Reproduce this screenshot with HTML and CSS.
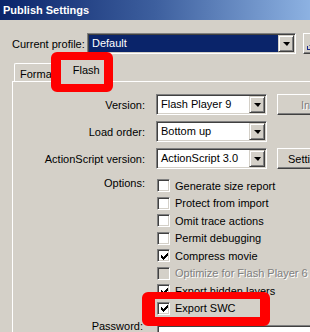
FILE: index.html
```html
<!DOCTYPE html>
<html>
<head>
<meta charset="utf-8">
<link rel="stylesheet" href="styles.css">
</head>
<body>
<div class="window">
  <div class="titlebar">Publish Settings</div>
  <div class="profile-row">
    <span class="profile-label">Current profile:</span>
    <div class="combo combo-profile">
      <span class="combo-value selected">Default</span>
      <span class="drop"><span class="arrow"></span></span>
    </div>
    <div class="btn iconbtn">
      <svg width="12" height="14" viewBox="0 0 12 14"><path d="M5 1h2v7h2l-3 3-3-3h2z" fill="#1c2a8c"/><path d="M1 12h10v1H1z" fill="#1c2a8c"/><path d="M1 9h1v3H1zM10 9h1v3h-1z" fill="#1c2a8c"/></svg>
    </div>
  </div>
  <div class="tabs">
    <div class="tab">Format</div>
    <div class="tab active">Flash</div>
  </div>
  <div class="panel">
    <div class="form">
      <span class="label">Version:</span>
      <div class="combo"><span class="combo-value">Flash Player 9</span><span class="drop"><span class="arrow"></span></span></div>
      <div class="btn side disabled info">Info...</div>

      <span class="label">Load order:</span>
      <div class="combo"><span class="combo-value">Bottom up</span><span class="drop"><span class="arrow"></span></span></div>
      <span></span>

      <span class="label">ActionScript version:</span>
      <div class="combo"><span class="combo-value">ActionScript 3.0</span><span class="drop"><span class="arrow"></span></span></div>
      <div class="btn side">Settings...</div>

      <span class="label label-top">Options:</span>
      <div class="checks">
        <div class="check"><span class="box"></span>Generate size report</div>
        <div class="check"><span class="box"></span>Protect from import</div>
        <div class="check"><span class="box"></span>Omit trace actions</div>
        <div class="check"><span class="box"></span>Permit debugging</div>
        <div class="check"><span class="box checked"><svg width="9" height="9" viewBox="0 0 9 9"><path d="M7 1h1v1H7zM6 2h2v1H6zM1 3h1v1H1zM5 3h3v1H5zM1 4h2v1H1zM4 4h3v1H4zM1 5h5v1H1zM2 6h3v1H2zM3 7h1v1H3z" fill="#000"/></svg></span>Compress movie</div>
        <div class="check disabled"><span class="box"></span>Optimize for Flash Player 6 r65</div>
        <div class="check"><span class="box checked"><svg width="9" height="9" viewBox="0 0 9 9"><path d="M7 1h1v1H7zM6 2h2v1H6zM1 3h1v1H1zM5 3h3v1H5zM1 4h2v1H1zM4 4h3v1H4zM1 5h5v1H1zM2 6h3v1H2zM3 7h1v1H3z" fill="#000"/></svg></span>Export hidden layers</div>
        <div class="check"><span class="box checked"><svg width="9" height="9" viewBox="0 0 9 9"><path d="M7 1h1v1H7zM6 2h2v1H6zM1 3h1v1H1zM5 3h3v1H5zM1 4h2v1H1zM4 4h3v1H4zM1 5h5v1H1zM2 6h3v1H2zM3 7h1v1H3z" fill="#000"/></svg></span>Export SWC</div>
      </div>

      <span class="label label-pw">Password:</span>
      <div class="textbox"></div>
    </div>
  </div>
  <div class="mark mark-tab"></div>
  <div class="mark mark-swc"></div>
</div>
</body>
</html>
```

FILE: styles.css
```css
html, body {
  margin: 0;
  padding: 0;
}
body {
  width: 310px;
  height: 332px;
  overflow: hidden;
  background: #d4d0c8;
  font-family: "Liberation Sans", Arial, sans-serif;
  font-size: 11px;
  color: #000;
}
.window {
  position: relative;
  width: 310px;
  height: 332px;
  overflow: hidden;
}
.titlebar {
  height: 20px;
  line-height: 20px;
  padding-left: 3px;
  font-weight: bold;
  color: #fff;
  background: linear-gradient(to right, #0a246a 0%, #3d5f9e 50%, #8db2e2 100%);
}
.profile-row {
  display: flex;
  align-items: center;
  margin-top: 13px;
  padding-left: 12px;
  height: 21px;
  white-space: nowrap;
}
.profile-label {
  width: 75px;
  flex: none;
}
.combo {
  display: flex;
  box-sizing: border-box;
  height: 21px;
  background: #fff;
  border: 1px solid;
  border-color: #808080 #fff #fff #808080;
  box-shadow: inset 1px 1px #404040, inset -1px -1px #d4d0c8;
  padding: 2px;
}
.combo-profile {
  width: 209px;
  flex: none;
}
.combo-value {
  flex: 1;
  line-height: 15px;
  padding-left: 2px;
  white-space: nowrap;
  overflow: hidden;
}
.combo-value.selected {
  background: #0a246a;
  color: #fff;
  margin: -1px 0 -1px -1px;
  line-height: 17px;
  padding-left: 3px;
}
.drop {
  flex: none;
  width: 16px;
  height: 17px;
  margin: -1px -1px -1px 0;
  box-sizing: border-box;
  background: #d4d0c8;
  border: 1px solid;
  border-color: #d4d0c8 #404040 #404040 #d4d0c8;
  box-shadow: inset 1px 1px #fff, inset -1px -1px #808080;
  display: flex;
  align-items: center;
  justify-content: center;
}
.arrow {
  width: 0;
  height: 0;
  border-left: 4px solid transparent;
  border-right: 3px solid transparent;
  border-top: 4px solid #000;
  margin-top: 1px;
}
.btn {
  box-sizing: border-box;
  height: 21px;
  background: #d4d0c8;
  border: 1px solid;
  border-color: #fff #404040 #404040 #fff;
  box-shadow: inset -1px -1px #808080, inset 1px 1px #d4d0c8;
  display: flex;
  align-items: center;
  justify-content: center;
  white-space: nowrap;
}
.iconbtn {
  flex: none;
  width: 24px;
  margin-left: 7px;
  justify-content: flex-start;
  padding-left: 2px;
}
.tabs {
  display: flex;
  align-items: flex-end;
  margin-top: 5px;
  padding-left: 14px;
  height: 22px;
}
.tab {
  box-sizing: border-box;
  height: 18px;
  padding: 4px 6px 0 5px;
  border: 1px solid;
  border-bottom: none;
  border-color: #fff #404040 transparent #fff;
  box-shadow: inset -1px 0 #808080;
  border-radius: 2px 2px 0 0;
}
.tab.active {
  height: 23px;
  margin-bottom: -1px;
  padding: 4px 10px 0 12px;
  background: #d4d0c8;
  position: relative;
  z-index: 1;
  margin-left: -2px;
}
.panel {
  margin-left: 12px;
  width: 400px;
  height: 260px;
  border-top: 1px solid #fff;
  border-left: 1px solid #fff;
  padding-top: 12px;
}
.form {
  display: grid;
  grid-template-columns: 132px 112px 1fr;
  grid-template-rows: 21px 21px 21px auto 21px;
  column-gap: 10px;
  row-gap: 6px;
  align-items: center;
  white-space: nowrap;
}
.label {
  text-align: right;
}
.label-top {
  align-self: start;
  margin-top: 2px;
}
.form .combo {
  margin-left: 1px;
  width: 111px;
}
.side {
  width: 80px;
  justify-content: flex-start;
  padding-left: 10px;
}
.side.info {
  padding-left: 23px;
}
.btn.disabled {
  color: #808080;
  text-shadow: 1px 1px #fff;
}
.checks {
  grid-column: 2 / 4;
  display: flex;
  flex-direction: column;
  margin-top: 2px;
}
.check {
  height: 17.5px;
  display: flex;
  align-items: center;
  padding-left: 2px;
}
.box {
  box-sizing: border-box;
  width: 13px;
  height: 13px;
  margin-right: 5px;
  background: #fff;
  border: 1px solid;
  border-color: #808080 #fff #fff #808080;
  box-shadow: inset 1px 1px #404040, inset -1px -1px #d4d0c8;
  display: flex;
  align-items: center;
  justify-content: center;
}
.box svg {
  display: block;
  margin: 1px 0 0 1px;
}
.check.disabled {
  color: #808080;
  text-shadow: 1px 1px #fff;
}
.check.disabled .box {
  background: #d4d0c8;
}
.label-pw {
  align-self: start;
  margin-top: -3px;
  margin-right: 2px;
}
.textbox {
  grid-column: 2 / 4;
  align-self: start;
  margin-top: 2px;
  margin-left: 2px;
  height: 21px;
  box-sizing: border-box;
  background: #fff;
  border: 1px solid;
  border-color: #808080 #fff #fff #808080;
  box-shadow: inset 1px 1px #404040;
}
.mark {
  position: absolute;
  box-sizing: border-box;
  border: 8px solid #ff0000;
  border-radius: 6px;
  z-index: 5;
}
.mark-tab {
  left: 51px;
  top: 52px;
  width: 62px;
  height: 40px;
  border-top-width: 8px;
  border-left-width: 10px;
  border-right-width: 9px;
}
.mark-swc {
  left: 142px;
  top: 292px;
  width: 128px;
  height: 34px;
  border-left-width: 13px;
  border-top-width: 7px;
  border-right-width: 10px;
  border-bottom-width: 9px;
}
```
